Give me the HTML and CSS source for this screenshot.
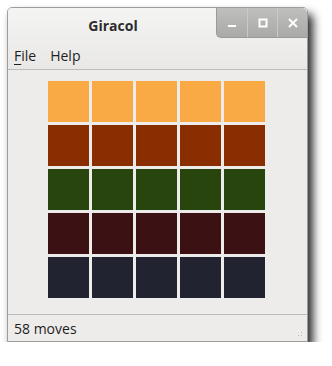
FILE: index.html
```html
<!DOCTYPE html>
<html lang="en">
<head>
    <meta charset="UTF-8">
    <title>Giracol</title>
    <link rel="stylesheet" href="styles.css">
</head>
<body>
    <div class="window">
        <div class="header">
            <div class="titlebar">
                <div class="title">Giracol</div>
                <div class="controls">
                    <button class="ctl" title="Minimize">
                        <svg width="10" height="10" viewBox="0 0 10 10"><rect x="1" y="7" width="8" height="2" fill="#fff"/></svg>
                    </button>
                    <button class="ctl" title="Maximize">
                        <svg width="10" height="10" viewBox="0 0 10 10"><rect x="1.5" y="1.5" width="7" height="7" fill="none" stroke="#fff" stroke-width="2"/></svg>
                    </button>
                    <button class="ctl" title="Close">
                        <svg width="10" height="10" viewBox="0 0 10 10"><path d="M1 1 L9 9 M9 1 L1 9" stroke="#fff" stroke-width="2"/></svg>
                    </button>
                </div>
            </div>
            <div class="menubar">
                <span class="menu"><u>F</u>ile</span>
                <span class="menu">Help</span>
            </div>
        </div>

        <div class="content">
            <div class="board">
                <div class="tile c1"></div><div class="tile c1"></div><div class="tile c1"></div><div class="tile c1"></div><div class="tile c1"></div>
                <div class="tile c2"></div><div class="tile c2"></div><div class="tile c2"></div><div class="tile c2"></div><div class="tile c2"></div>
                <div class="tile c3"></div><div class="tile c3"></div><div class="tile c3"></div><div class="tile c3"></div><div class="tile c3"></div>
                <div class="tile c4"></div><div class="tile c4"></div><div class="tile c4"></div><div class="tile c4"></div><div class="tile c4"></div>
                <div class="tile c5"></div><div class="tile c5"></div><div class="tile c5"></div><div class="tile c5"></div><div class="tile c5"></div>
            </div>
        </div>

        <div class="statusbar">
            <span>58 moves</span>
            <div class="grip"></div>
        </div>
    </div>
</body>
</html>
```

FILE: styles.css
```css
body {
    margin: 0;
    background-color: #fff;
    font-family: "Open Sans", "DejaVu Sans", sans-serif;
    color: #2e2e2e;
}
.window {
    margin: 7px 0 0 7px;
    width: 299px;
    height: 333px;
    border: 1px solid #9d9d9d;
    border-radius: 5px 5px 0 0;
    background-color: #edecea;
    box-shadow: 5px 7px 10px rgba(0, 0, 0, 0.85);
    display: flex;
    flex-direction: column;
    overflow: hidden;
}
.header {
    height: 61px;
    background: linear-gradient(#f4f4f3, #e9e8e6);
    border-bottom: 1px solid #bdbcba;
}
.titlebar {
    display: flex;
    height: 40px;
}
.title {
    flex: 1;
    text-align: center;
    font-weight: bold;
    font-size: 14px;
    line-height: 36px;
    color: #2c2c2c;
    padding-left: 2px;
}
.controls {
    display: flex;
    align-self: flex-start;
    height: 29px;
    background: linear-gradient(#bfbfbe, #a9a9a8);
    border-radius: 0 5px 0 5px;
    border-bottom: 1px solid #9a9a99;
    border-left: 1px solid #9a9a99;
}
.ctl {
    width: 30px;
    height: 29px;
    padding: 0;
    border: none;
    background: none;
    display: flex;
    align-items: center;
    justify-content: center;
}
.ctl + .ctl {
    border-left: 1px solid #c9c9c8;
}
.menubar {
    display: flex;
    gap: 14px;
    padding-left: 6px;
    font-size: 14px;
    line-height: 16px;
    color: #1e1e1e;
}
.menu u {
    text-decoration-thickness: 1px;
    text-underline-offset: 3px;
}
.content {
    flex: 1;
    padding: 11px 0 0 40px;
}
.board {
    display: grid;
    grid-template-columns: repeat(5, 41px);
    grid-auto-rows: 41px;
    gap: 3px;
}
.c1 { background-color: #f9aa44; }
.c2 { background-color: #892e00; }
.c3 { background-color: #29450e; }
.c4 { background-color: #3c1113; }
.c5 { background-color: #212331; }
.statusbar {
    height: 26px;
    border-top: 1px solid #bdbcba;
    display: flex;
    align-items: center;
    justify-content: space-between;
    padding-left: 6px;
    font-size: 14px;
    color: #1e1e1e;
}
.grip {
    width: 10px;
    height: 10px;
    align-self: flex-end;
    margin: 0 3px 3px 0;
    background-image: radial-gradient(circle, #b8b7b5 1px, transparent 1px);
    background-size: 3px 3px;
    clip-path: polygon(100% 0, 100% 100%, 0 100%);
}
```
